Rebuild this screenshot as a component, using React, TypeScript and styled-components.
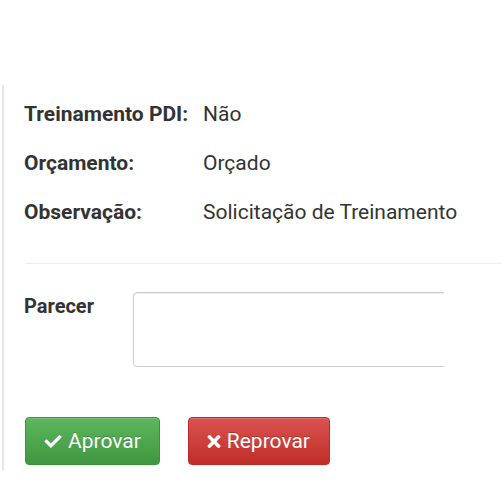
import React from 'react'
import styled, { createGlobalStyle } from 'styled-components'
import { FaCheck, FaTimes } from 'react-icons/fa'

const GlobalStyle = createGlobalStyle`
    body {
        margin: 0;
        background: #fff;
        font-family: Roboto, "Liberation Sans", sans-serif;
        color: #333;
    }
`
const Page = styled.div`
    width: 502px;
    height: 486px;
    overflow: hidden;
    padding-top: 85px;
    box-sizing: border-box;
`
const Panel = styled.div`
    margin-left: 2px;
    border-left: 2px solid #e6e6e6;
    padding: 17px 0 0 20px;
    height: 385px;
    box-sizing: border-box;
`
const Details = styled.dl`
    display: grid;
    grid-template-columns: 179px auto;
    grid-auto-rows: 49px;
    margin: 0;
    font-size: 21px;
    line-height: 24px;
`
const Term = styled.dt`
    font-weight: 700;
    margin: 0;
`
const Value = styled.dd`
    margin: 0;
    white-space: nowrap;
`
const Rule = styled.hr`
    border: 0;
    border-top: 1px solid #eee;
    margin: 14px 0 0 1px;
    width: 500px;
`
const Field = styled.div`
    display: grid;
    grid-template-columns: 109px 311px;
    margin-top: 28px;
`
const FieldLabel = styled.label`
    font-weight: 700;
    font-size: 20px;
    line-height: 24px;
    padding-top: 2px;
`
const Clip = styled.div`
    overflow: hidden;
    height: 75px;
`
const TextArea = styled.textarea`
    display: block;
    width: 400px;
    height: 75px;
    box-sizing: border-box;
    border: 1px solid #ccc;
    border-radius: 4px;
    resize: none;
    box-shadow: inset 0 1px 1px rgba(0, 0, 0, 0.075);
`
const Actions = styled.div`
    display: flex;
    gap: 28px;
    margin-top: 50px;
    padding-left: 1px;
`
const Button = styled.button<{ $tone: 'success' | 'danger' }>`
    display: inline-flex;
    align-items: center;
    gap: 6px;
    height: 48px;
    padding: 0 ${p => (p.$tone === 'success' ? '18px 0 18px' : '19px 0 18px')};
    border-radius: 4px;
    font-family: Roboto, "Liberation Sans", sans-serif;
    font-size: 21px;
    color: #fff;
    text-shadow: 0 -1px 0 rgba(0, 0, 0, 0.2);
    box-shadow: inset 0 1px 0 rgba(255, 255, 255, 0.15), 0 1px 1px rgba(0, 0, 0, 0.075);
    border: 1px solid ${p => (p.$tone === 'success' ? '#3e8f3e' : '#b92c28')};
    background: ${p =>
        p.$tone === 'success'
            ? 'linear-gradient(to bottom, #5cb85c 0%, #419641 100%)'
            : 'linear-gradient(to bottom, #d9534f 0%, #c12e2a 100%)'};
`
const CheckIcon = styled(FaCheck)`
    width: 18px;
    height: 17px;
`
const TimesIcon = styled(FaTimes)`
    width: 14px;
    height: 19px;
`

const App = () => (
    <Page>
        <GlobalStyle />
        <Panel>
            <Details>
                <Term>Treinamento PDI:</Term>
                <Value>Não</Value>
                <Term>Orçamento:</Term>
                <Value>Orçado</Value>
                <Term>Observação:</Term>
                <Value>Solicitação de Treinamento</Value>
            </Details>
            <Rule />
            <Field>
                <FieldLabel>Parecer</FieldLabel>
                <Clip>
                    <TextArea />
                </Clip>
            </Field>
            <Actions>
                <Button $tone="success">
                    <CheckIcon />
                    Aprovar
                </Button>
                <Button $tone="danger">
                    <TimesIcon />
                    Reprovar
                </Button>
            </Actions>
        </Panel>
    </Page>
)

export default App
